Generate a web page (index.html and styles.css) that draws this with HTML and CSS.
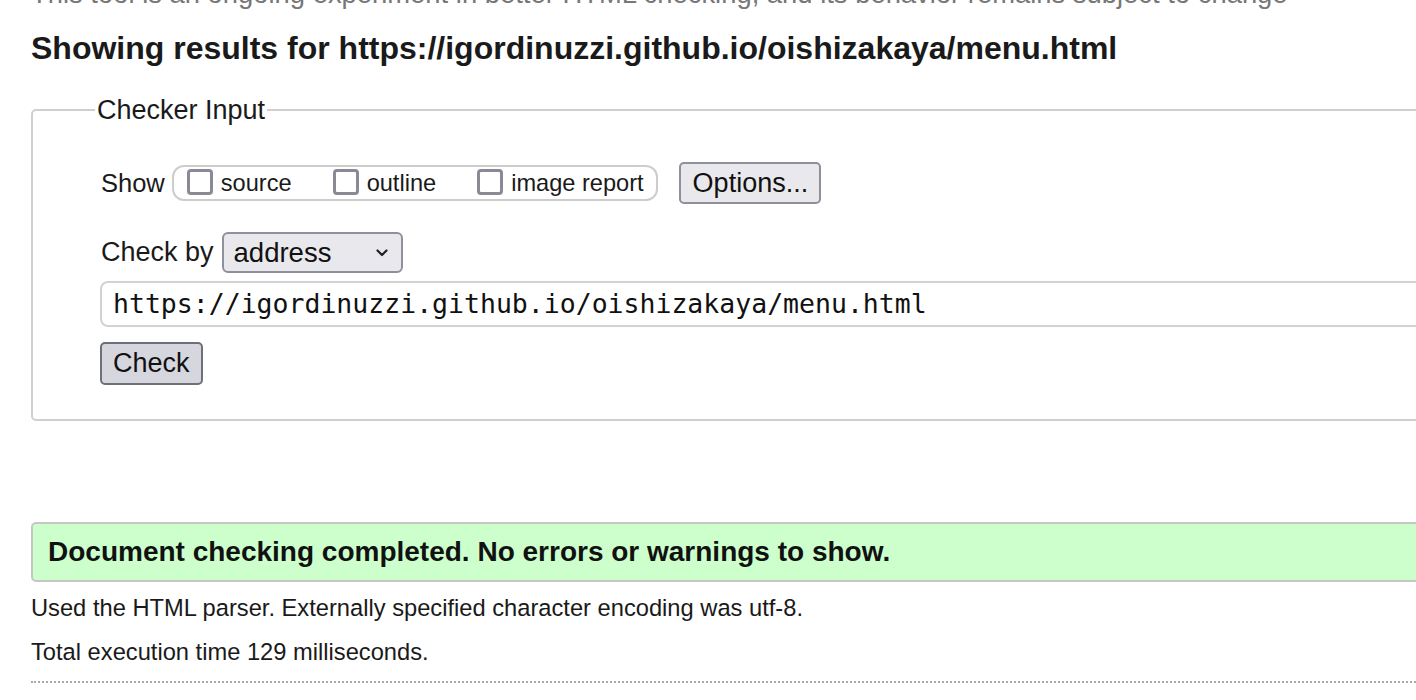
FILE: index.html
```html
<!DOCTYPE html>
<html>
<head>
<meta charset="utf-8">
<link rel="stylesheet" href="styles.css">
</head>
<body>
<p class="intro">This tool is an ongoing experiment in better HTML checking, and its behavior remains subject to change</p>
<h2 class="title">Showing results for https://igordinuzzi.github.io/oishizakaya/menu.html</h2>
<fieldset class="checker">
  <legend class="legend">Checker Input</legend>
  <div class="row show-row">
    <span class="label">Show</span>
    <span class="group">
      <span class="opt"><span class="box"></span><span class="opt-text">source</span></span>
      <span class="opt"><span class="box"></span><span class="opt-text">outline</span></span>
      <span class="opt"><span class="box"></span><span class="opt-text">image report</span></span>
    </span>
    <span class="btn options">Options...</span>
  </div>
  <div class="row by-row">
    <span class="label label-by">Check by</span>
    <span class="select"><span class="sel-text">address</span><svg class="chev" width="14" height="10" viewBox="0 0 14 10"><path d="M2.5 2.5 L7 7 L11.5 2.5" fill="none" stroke="#222" stroke-width="2.2" stroke-linecap="round" stroke-linejoin="round"/></svg></span>
  </div>
  <div class="url">https://igordinuzzi.github.io/oishizakaya/menu.html</div>
  <div class="btn check">Check</div>
</fieldset>
<div class="success">Document checking completed. No errors or warnings to show.</div>
<p class="info">Used the HTML parser. Externally specified character encoding was utf-8.</p>
<p class="info">Total execution time 129 milliseconds.</p>
<div class="dots"></div>
</body>
</html>
```
FILE: styles.css
```css
html, body {
  margin: 0;
  padding: 0;
  background: #fff;
  overflow: hidden;
}
body {
  padding-left: 31px;
  font-family: "Liberation Sans", Arial, sans-serif;
  color: #111;
  width: 1600px;
}
.intro {
  margin: -21px 0 0 0;
  font-size: 27.4px;
  line-height: 30px;
  color: #777;
  white-space: nowrap;
}
.title {
  margin: 21px 0 0 0;
  font-size: 32px;
  line-height: 36px;
  font-weight: bold;
  color: #1a1a1a;
  white-space: nowrap;
}
.checker {
  margin: 29px 0 0 0;
  padding: 0 0 34px 68px;
  border: 2px solid #cfcfcf;
  border-radius: 5px;
  width: 1500px;
  box-sizing: border-box;
}
.legend {
  margin-left: -6px;
  padding: 0 2px;
  font-size: 27px;
  line-height: 30px;
  color: #1a1a1a;
}
.row {
  display: flex;
  align-items: center;
}
.show-row {
  margin-top: 36px;
  height: 44px;
}
.label {
  font-size: 25.5px;
  color: #1a1a1a;
  margin-right: 7px;
}
.label-by {
  font-size: 27px;
  margin-right: 8px;
}
.group {
  display: flex;
  align-items: center;
  box-sizing: border-box;
  height: 36px;
  padding: 0 12px 0 13px;
  border: 2px solid #cdcdcd;
  border-radius: 12px;
  gap: 41px;
}
.opt {
  display: flex;
  align-items: center;
  gap: 8px;
}
.box {
  width: 20px;
  height: 20px;
  margin-top: -3px;
  border: 3px solid #8a8996;
  border-radius: 4px;
  background: #fff;
}
.opt-text {
  font-size: 23.6px;
  color: #1a1a1a;
}
.btn {
  background: #e9e9ed;
  border: 2px solid #8f8f9d;
  border-radius: 5px;
  font-size: 27px;
  color: #111;
  display: inline-flex;
  align-items: center;
  box-sizing: border-box;
}
.options {
  margin-left: 21px;
  height: 42px;
  padding: 0 11px 0 12px;
}
.by-row {
  margin-top: 27px;
}
.select {
  display: flex;
  align-items: center;
  box-sizing: border-box;
  height: 41px;
  width: 181px;
  background: #e9e9ed;
  border: 2px solid #8f8f9d;
  border-radius: 6px;
  padding: 0 12px 0 10px;
  justify-content: space-between;
}
.sel-text {
  font-size: 27.5px;
  color: #111;
}
.url {
  margin-top: 8px;
  margin-left: -1px;
  box-sizing: border-box;
  height: 46px;
  border: 2px solid #d2d2d2;
  border-radius: 8px;
  padding: 0 11px;
  font-family: "DejaVu Sans Mono", monospace;
  font-size: 26.5px;
  line-height: 42px;
  color: #111;
}
.check {
  margin-top: 15px;
  margin-left: -1px;
  height: 43px;
  padding: 0 11px;
  background: #d6d6de;
  border-color: #6f6f78;
}
.success {
  margin-top: 101px;
  width: 1500px;
  box-sizing: border-box;
  height: 60px;
  background: #ccffcc;
  border: 2px solid #c4c8c4;
  border-radius: 5px;
  padding-left: 15px;
  font-size: 28px;
  font-weight: bold;
  line-height: 56px;
  color: #111;
}
.info {
  margin: 11px 0 0 0;
  font-size: 23.7px;
  line-height: 31px;
  color: #1a1a1a;
}
.info + .info {
  margin-top: 13px;
}
.dots {
  margin-top: 13px;
  border-top: 2px dotted #aaa;
  width: 1500px;
}
```
